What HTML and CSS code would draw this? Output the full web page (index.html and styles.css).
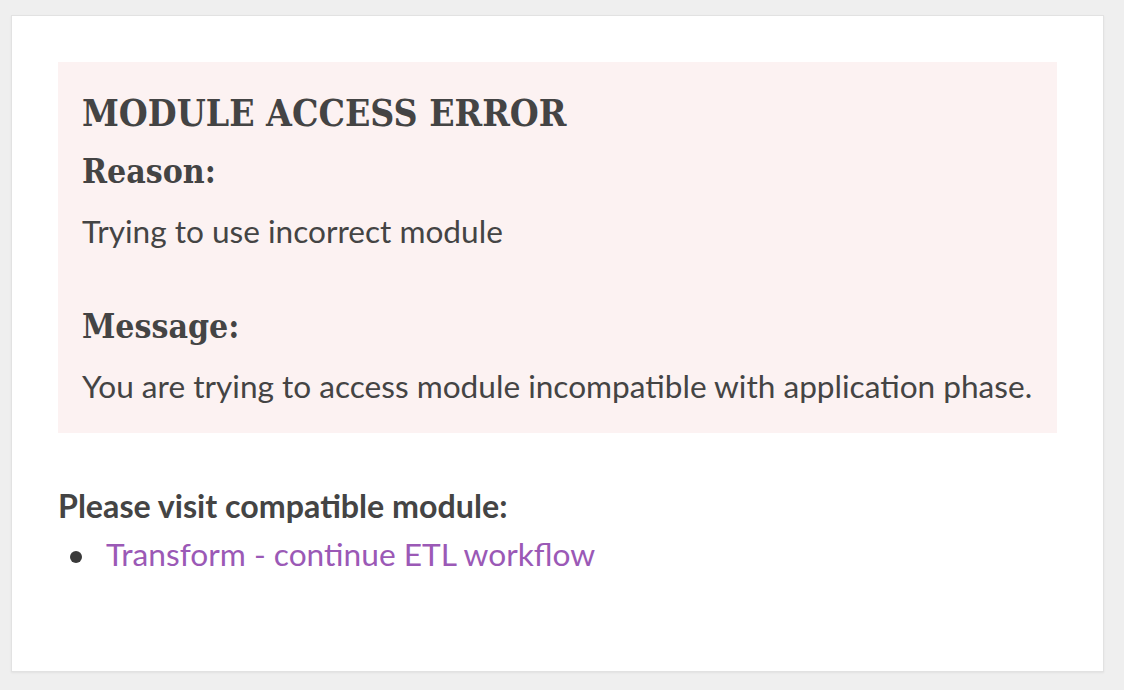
FILE: index.html
```html
<!DOCTYPE html>
<html lang="en">
<head>
<meta charset="utf-8">
<title>Module access error</title>
<link rel="stylesheet" href="styles.css">
</head>
<body>
<main class="card">
  <section class="error-box">
    <h1 class="error-title">MODULE ACCESS ERROR</h1>
    <h2 class="error-label">Reason:</h2>
    <p class="error-text">Trying to use incorrect module</p>
    <h2 class="error-label error-label--spaced">Message:</h2>
    <p class="error-text">You are trying to access module incompatible with application phase.</p>
  </section>
  <p class="visit-title">Please visit compatible module:</p>
  <ul class="visit-list">
    <li class="visit-item"><a class="visit-link" href="#">Transform - continue ETL workflow</a></li>
  </ul>
</main>
</body>
</html>
```

FILE: styles.css
```css
html, body {
  margin: 0;
  background: #efefef;
}
body {
  padding: 15px 20px 18px 11px;
  font-family: Lato, "Noto Sans", sans-serif;
  color: #444;
}
.card {
  box-sizing: border-box;
  height: 657px;
  background: #fff;
  border: 1px solid #e2e2e2;
  box-shadow: 0 1px 2px rgba(0,0,0,0.06);
  padding: 46px;
}
.error-box {
  background: #fcf2f2;
  padding: 24px 20px 27px 24px;
}
.error-title,
.error-label {
  font-family: "DejaVu Serif Condensed", "DejaVu Serif", serif;
  font-stretch: condensed;
  font-weight: bold;
  color: #444;
}
.error-title {
  margin: 3px 0 0;
  font-size: 37px;
  line-height: 48px;
}
.error-label {
  margin: 15px 0 0;
  font-size: 33.5px;
  line-height: 40px;
}
.error-label--spaced {
  margin-top: 56px;
}
.error-text {
  margin: 19px 0 0;
  font-size: 31.6px;
  line-height: 40px;
  white-space: nowrap;
}
.visit-title {
  margin: 53px 0 0;
  font-weight: bold;
  font-size: 32.2px;
  line-height: 40px;
}
.visit-list {
  list-style: none;
  margin: 8px 0 0;
  padding: 0 0 0 12px;
  font-size: 31.7px;
  line-height: 40px;
}
.visit-item {
  display: flex;
  align-items: center;
}
.visit-item::before {
  content: "";
  flex: none;
  width: 12px;
  height: 12px;
  border-radius: 50%;
  background: #3a3a3a;
  margin: 6px 24px 0 0;
}
.visit-link {
  color: #9b59b6;
  text-decoration: none;
}
```
